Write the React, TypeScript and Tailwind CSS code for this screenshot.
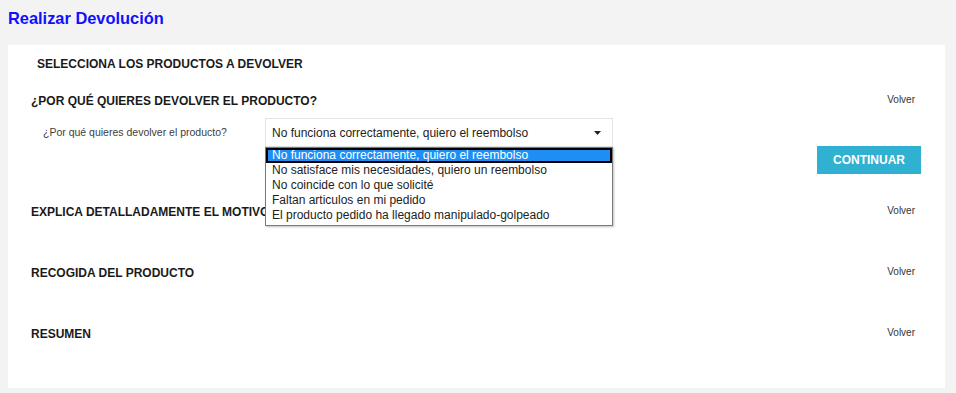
import React from "react";

const options = [
  "No funciona correctamente, quiero el reembolso",
  "No satisface mis necesidades, quiero un reembolso",
  "No coincide con lo que solicité",
  "Faltan articulos en mi pedido",
  "El producto pedido ha llegado manipulado-golpeado",
];

function Volver() {
  return <span className="text-[10px] leading-[12px] text-[#333] mb-[3px]">Volver</span>;
}

export default function App() {
  return (
    <div
      className="w-[956px] h-[393px] bg-[#f3f3f3] overflow-hidden"
      style={{ fontFamily: '"Liberation Sans", Arial, sans-serif' }}
    >
      <h1 className="pl-[8px] pt-[8px] h-[45px] text-[16.4px] leading-[20px] font-bold text-[#1010ff]">
        Realizar Devolución
      </h1>
      <div className="ml-[8px] w-[937px] h-[343px] bg-white pt-[11px] flex flex-col">
        <div className="pl-[29px] h-[16px] text-[12px] leading-[16px] font-bold text-[#1a1a1a]">
          SELECCIONA LOS PRODUCTOS A DEVOLVER
        </div>
        <div className="mt-[21px] pl-[23px] pr-[30px] h-[16px] flex items-center justify-between">
          <span className="text-[12px] leading-[16px] font-bold text-[#1a1a1a]">
            ¿POR QUÉ QUIERES DEVOLVER EL PRODUCTO?
          </span>
          <Volver />
        </div>
        <div className="mt-[9px] h-[28px] flex items-center">
          <span className="pl-[35px] w-[257px] text-[10.5px] leading-[14px] text-[#404040]">
            ¿Por qué quieres devolver el producto?
          </span>
          <div className="relative w-[348px] h-[29px] self-start">
            <div className="w-full h-full border border-[#e3e3e3] flex items-center justify-between pl-[6px] pr-[11px] text-[12px] text-[#222]">
              <span>{options[0]}</span>
              <svg width="7" height="4" viewBox="0 0 7 4">
                <path d="M0 0h7L3.5 4z" fill="#222" />
              </svg>
            </div>
            <div className="absolute left-0 top-[29px] z-10 w-[348px] bg-white border border-[#7a7a7a] shadow-[1px_1px_2px_rgba(0,0,0,0.25)] pb-[2px]">
              {options.map((o, i) => (
                <div
                  key={o}
                  className={
                    i === 0
                      ? "h-[15px] leading-[11px] pl-[4px] text-[12px] text-white bg-[#1e8ef5] border-2 border-black"
                      : "h-[15px] leading-[15px] pl-[6px] text-[12px] text-[#222]"
                  }
                >
                  {o}
                </div>
              ))}
            </div>
          </div>
        </div>
        <div className="flex justify-end pr-[24px]">
          <button className="w-[104px] h-[28px] bg-[#30b1d1] text-white text-[12px] font-bold">
            CONTINUAR
          </button>
        </div>
        <div className="mt-[30px] pl-[23px] pr-[30px] h-[16px] flex items-center justify-between">
          <span className="text-[12px] leading-[16px] font-bold text-[#1a1a1a]">
            EXPLICA DETALLADAMENTE EL MOTIVO
          </span>
          <Volver />
        </div>
        <div className="mt-[45px] pl-[23px] pr-[30px] h-[16px] flex items-center justify-between">
          <span className="text-[12px] leading-[16px] font-bold text-[#1a1a1a]">
            RECOGIDA DEL PRODUCTO
          </span>
          <Volver />
        </div>
        <div className="mt-[45px] pl-[23px] pr-[30px] h-[16px] flex items-center justify-between">
          <span className="text-[12px] leading-[16px] font-bold text-[#1a1a1a]">RESUMEN</span>
          <Volver />
        </div>
      </div>
    </div>
  );
}
